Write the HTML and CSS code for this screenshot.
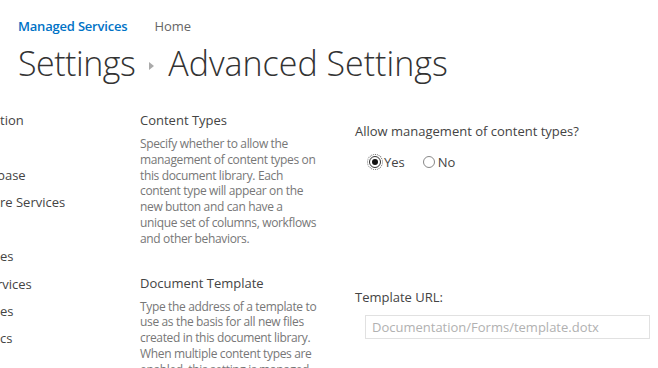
FILE: index.html
```html
<!DOCTYPE html>
<html>
<head>
    <title>Advanced Settings</title>
    <link rel="stylesheet" href="styles.css">
</head>
<body>
    <div class="top">
        <div class="crumbs">
            <a class="site-link" href="#">Managed Services</a>
            <a class="home-link" href="#">Home</a>
        </div>
        <h1 class="page-title">
            <span class="title-first">Settings</span>
            <span class="title-arrow"></span>
            <span>Advanced Settings</span>
        </h1>
    </div>

    <div class="page">
        <ul class="quick-launch">
            <li>tion</li>
            <li></li>
            <li class="cut">base</li>
            <li>re Services</li>
            <li></li>
            <li>es</li>
            <li class="cut">rvices</li>
            <li>es</li>
            <li>cs</li>
        </ul>

        <div class="settings">
            <div class="section">
                <div class="section-info">
                    <h3>Content Types</h3>
                    <p>Specify whether to allow the management of content types on this document library. Each content type will appear on the new button and can have a unique set of columns, workflows and other behaviors.</p>
                </div>
                <div class="section-field">
                    <div class="field-label">Allow management of content types?</div>
                    <div class="radio-row">
                        <label class="radio checked"><span class="dot"></span>Yes</label>
                        <label class="radio"><span class="dot"></span>No</label>
                    </div>
                </div>
            </div>

            <div class="section">
                <div class="section-info">
                    <h3>Document Template</h3>
                    <p>Type the address of a template to use as the basis for all new files created in this document library. When multiple content types are enabled, this setting is managed on a per content type basis.</p>
                </div>
                <div class="section-field template-field">
                    <div class="field-label">Template URL:</div>
                    <input type="text" class="url-input" placeholder="Documentation/Forms/template.dotx">
                </div>
            </div>
        </div>
    </div>
</body>
</html>
```

FILE: styles.css
```css
body {
    font-family: "Open Sans", "Noto Sans", sans-serif;
    margin: 0;
    background-color: #fff;
    color: #444;
    overflow: hidden;
}
.top {
    padding: 16px 0 0 18px;
}
.crumbs {
    display: flex;
    gap: 27px;
    font-size: 13px;
    line-height: 20px;
}
.site-link {
    color: #0072c6;
    font-weight: 600;
    text-decoration: none;
    letter-spacing: -0.2px;
}
.home-link {
    color: #666;
    text-decoration: none;
}
.page-title {
    display: flex;
    align-items: center;
    gap: 14px;
    margin: 3px 0 0;
    font-size: 34px;
    font-weight: 300;
    line-height: 48px;
    color: #333;
}
.title-first {
    letter-spacing: -0.5px;
}
.title-arrow {
    width: 0;
    height: 0;
    border-top: 4px solid transparent;
    border-bottom: 4px solid transparent;
    border-left: 5px solid #aaa;
    margin-top: 6px;
}
.page {
    display: flex;
    margin-top: 23px;
}
.quick-launch {
    list-style: none;
    margin: 0;
    padding: 0;
    width: 140px;
    flex-shrink: 0;
    font-size: 13px;
}
.quick-launch li {
    height: 27.3px;
    line-height: 20px;
}
.quick-launch li.cut {
    margin-left: -3px;
}
.settings {
    flex: 1;
}
.section {
    display: flex;
}
.section-info {
    width: 180px;
    flex-shrink: 0;
    margin-right: 35px;
}
.section-info h3 {
    margin: 0 0 6px;
    font-size: 13px;
    font-weight: normal;
    line-height: 20px;
    color: #444;
}
.section-info p {
    margin: 0 0 26px;
    font-size: 12px;
    letter-spacing: -0.35px;
    line-height: 15.8px;
    color: #777;
}
.section-field {
    flex: 1;
    padding-top: 12px;
}
.field-label {
    font-size: 13px;
    line-height: 18px;
    color: #444;
}
.radio-row {
    display: flex;
    gap: 18px;
    margin: 13px 0 0 14px;
    font-size: 13px;
    line-height: 18px;
}
.radio {
    display: flex;
    align-items: center;
    gap: 3px;
}
.dot {
    position: relative;
    width: 12px;
    height: 12px;
    border: 1px solid #888;
    border-radius: 50%;
    box-sizing: border-box;
}
.radio.checked .dot {
    border-color: #333;
    outline: 1px dotted #666;
    outline-offset: 1px;
}
.radio.checked .dot::after {
    content: "";
    position: absolute;
    left: 2px;
    top: 2px;
    width: 6px;
    height: 6px;
    border-radius: 50%;
    background: #111;
}
.template-field {
    padding-top: 15px;
}
.url-input {
    display: block;
    width: 285px;
    height: 24px;
    margin: 9px 0 0 10px;
    padding: 0 6px;
    border: 1px solid #e1e1e1;
    box-sizing: border-box;
    font-family: inherit;
    font-size: 13px;
    color: #444;
}
.url-input::placeholder {
    color: #b1b1b1;
}
```
